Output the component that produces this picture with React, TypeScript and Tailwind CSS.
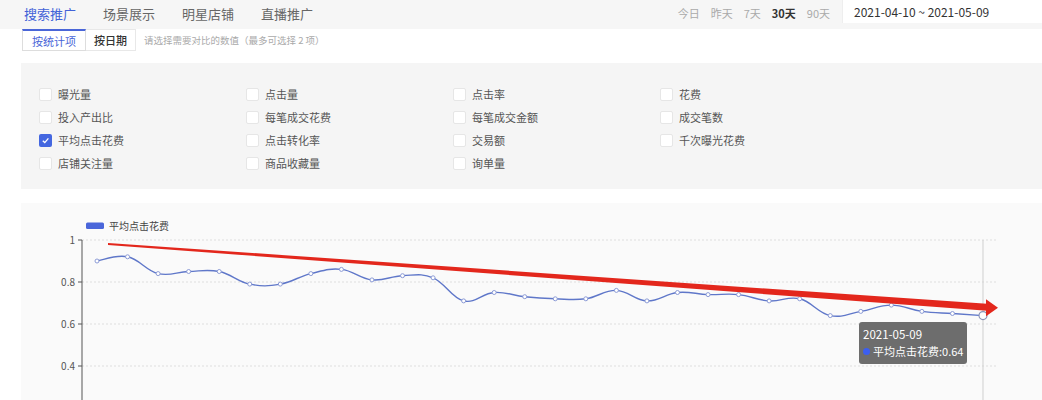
import React from "react";

const FONT = { fontFamily: '"Noto Sans CJK SC", "Noto Sans", sans-serif' };

const TABS = ["搜索推广", "场景展示", "明星店铺", "直播推广"];
const RANGES = ["今日", "昨天", "7天", "30天", "90天"];

const METRICS = [
  ["曝光量", "点击量", "点击率", "花费"],
  ["投入产出比", "每笔成交花费", "每笔成交金额", "成交笔数"],
  ["平均点击花费", "点击转化率", "交易额", "千次曝光花费"],
  ["店铺关注量", "商品收藏量", "询单量", ""],
];

const DATA = [
  0.9, 0.92, 0.84, 0.85, 0.85, 0.79, 0.79, 0.84, 0.86, 0.81, 0.83, 0.82, 0.71, 0.75, 0.73,
  0.72, 0.72, 0.76, 0.71, 0.75, 0.74, 0.74, 0.71, 0.72, 0.64, 0.66, 0.69, 0.66, 0.65, 0.64,
];

const px = (i: number) => 97 + (i * 886) / 29;
const py = (v: number) => 240 + (1 - v) * 210;

function smoothPath(pts: [number, number][]) {
  const s = 0.2;
  let d = `M${pts[0][0]},${pts[0][1]}`;
  for (let i = 0; i < pts.length - 1; i++) {
    const p0 = pts[Math.max(i - 1, 0)];
    const p1 = pts[i];
    const p2 = pts[i + 1];
    const p3 = pts[Math.min(i + 2, pts.length - 1)];
    const c1x = p1[0] + (p2[0] - p0[0]) * s;
    const c1y = p1[1] + (p2[1] - p0[1]) * s;
    const c2x = p2[0] - (p3[0] - p1[0]) * s;
    const c2y = p2[1] - (p3[1] - p1[1]) * s;
    d += ` C${c1x.toFixed(1)},${c1y.toFixed(1)} ${c2x.toFixed(1)},${c2y.toFixed(1)} ${p2[0].toFixed(1)},${p2[1].toFixed(1)}`;
  }
  return d;
}

function Checkbox({ checked }: { checked?: boolean }) {
  if (checked) {
    return (
      <span className="flex h-[13px] w-[13px] items-center justify-center rounded-[2px] bg-[#4467e0]">
        <svg width="9" height="9" viewBox="0 0 10 10">
          <path d="M2 5.2 L4.2 7.3 L8.2 2.6" fill="none" stroke="#fff" strokeWidth="1.5" />
        </svg>
      </span>
    );
  }
  return <span className="h-[13px] w-[13px] rounded-[2px] border border-[#e6e6e6] bg-white" />;
}

function Chart() {
  const pts = DATA.map((v, i) => [px(i), py(v)] as [number, number]);
  const ticks = [1, 0.8, 0.6, 0.4];

  // red trend arrow, thickening toward the head
  const sx = 108, sy = 244, ex = 987, ey = 307.3;
  const arrow = `${sx},${sy - 1} ${ex},${ey - 3.5} ${ex},${ey + 3.5} ${sx},${sy + 1}`;
  const head = `${ex - 1},${ey - 8} ${998},${ey + 0.5} ${ex - 1},${ey + 9}`;

  return (
    <div className="relative ml-[21px] mt-[14px] h-[260px] bg-[#fafafa]">
      <svg width="1021" height="260" className="block">
        <g transform="translate(-21 -203)">
          <rect x="86" y="222.5" width="18" height="6.5" rx="1.5" fill="#4a66da" />
          <text x="109" y="229.5" fontSize="10" fill="#444">平均点击花费</text>

          {ticks.map((t) => (
            <g key={t}>
              <line x1="82" x2="998" y1={py(t)} y2={py(t)} stroke="#dedede" strokeDasharray="2 2" />
              <line x1="78" x2="82" y1={py(t)} y2={py(t)} stroke="#555" />
              <text x="75" y={py(t) + 3.5} fontSize="10" fill="#555" textAnchor="end">
                {t === 1 ? "1" : t.toFixed(1)}
              </text>
            </g>
          ))}
          <line x1="82" x2="998" y1="408" y2="408" stroke="#dedede" strokeDasharray="2 2" />
          <line x1="82" x2="82" y1="240" y2="470" stroke="#555" />
          <line x1="983" x2="983" y1="240" y2="470" stroke="#cfcfcf" />

          <path d={smoothPath(pts)} fill="none" stroke="#5f77c9" strokeWidth="1.4" />
          {pts.slice(0, -1).map(([x, y], i) => (
            <circle key={i} cx={x} cy={y} r="2" fill="#fff" stroke="#8c9bd6" strokeWidth="1" />
          ))}
          <circle cx={pts[29][0]} cy={pts[29][1]} r="4" fill="#fff" stroke="#8a94b8" strokeWidth="1.2" />

          <polygon points={arrow} fill="#e3271c" />
          <polygon points={head} fill="#e3271c" />
        </g>
      </svg>

      <div className="absolute left-[838px] top-[119px] w-[108px] whitespace-nowrap rounded-[3px] bg-[#6d6d6d] px-[4px] py-[4px] text-[11px] leading-[17px] text-white">
        <p className="text-[11.5px]">2021-05-09</p>
        <p className="flex items-center gap-[3px]">
          <span className="h-[7px] w-[7px] shrink-0 rounded-full bg-[#3b5ef0]" />
          平均点击花费:0.64
        </p>
      </div>
    </div>
  );
}

export default function App() {
  return (
    <div className="h-[400px] w-[1042px] overflow-hidden bg-white" style={FONT}>
      {/* top bar */}
      <div className="flex h-[29px] items-start bg-[#f6f6f6]">
        <div className="flex pl-[24px] pt-[5px] gap-[27px]">
          {TABS.map((t, i) => (
            <span key={t} className={`text-[13px] leading-[18px] ${i === 0 ? "text-[#4262d8]" : "text-[#666]"}`}>
              {t}
            </span>
          ))}
        </div>
        <div className="ml-auto flex items-center gap-[11px] pt-[5px] text-[11px] leading-[16px]">
          {RANGES.map((r) => (
            <span key={r} className={r === "30天" ? "font-bold text-[#333]" : "text-[#aaa]"}>
              {r}
            </span>
          ))}
        </div>
        <div className="ml-[12px] h-[23px] w-[200px] shrink-0 border-l border-[#eee] bg-white pl-[11px] text-[12px] leading-[23px] text-[#333]">
          2021-04-10 ~ 2021-05-09
        </div>
      </div>

      {/* mode toggle */}
      <div className="flex items-center pl-[22px]">
        <button className="h-[22px] border-x border-b border-t-2 border-[#ddd] border-t-[#4a66d8] bg-white px-[9px] text-[11px] leading-[18px] text-[#4a66d8]">
          按统计项
        </button>
        <button className="h-[22px] border-y border-r border-[#e8e8e8] bg-white px-[8px] text-[11px] leading-[20px] font-medium text-[#333]">
          按日期
        </button>
        <span className="ml-[8px] text-[9.5px] text-[#aaa]">请选择需要对比的数值（最多可选择 2 项）</span>
      </div>

      {/* metrics */}
      <div className="ml-[21px] mt-[12px] h-[126px] bg-[#f5f5f5] pl-[18px] pt-[20px]">
        {METRICS.map((row, r) => (
          <div key={r} className="grid h-[23px] grid-cols-[207px_207px_207px_207px] items-center">
            {row.map((m, c) =>
              m ? (
                <label key={c} className="flex items-center gap-[6px] text-[11px] text-[#555]">
                  <Checkbox checked={m === "平均点击花费"} />
                  {m}
                </label>
              ) : (
                <span key={c} />
              )
            )}
          </div>
        ))}
      </div>

      <Chart />
    </div>
  );
}
